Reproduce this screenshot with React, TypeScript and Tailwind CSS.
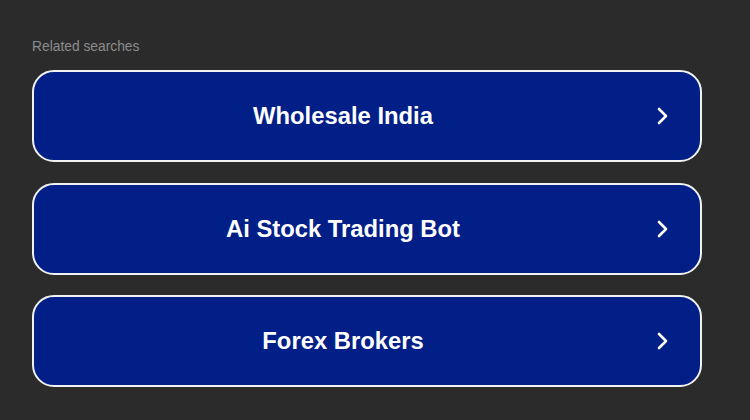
const items = ['Wholesale India', 'Ai Stock Trading Bot', 'Forex Brokers'];

export default function App() {
  return (
    <div className="min-h-screen w-full bg-[#2b2b2b] px-8 pt-[39px]" style={{ fontFamily: '"Liberation Sans", Arial, sans-serif' }}>
      <div className="text-[13.8px] leading-4 text-[#8c8c8c]">Related searches</div>
      <div className="mt-[15px] flex w-[670px] flex-col gap-[20.5px]">
        {items.map((label) => (
          <div
            key={label}
            className="relative flex h-[92px] items-center justify-center rounded-[22px] border-2 border-[#f2f2f2] bg-[#021e87] pr-12"
          >
            <span className="text-[23.8px] font-bold text-white">{label}</span>
            <svg
              className="absolute right-[30px] top-1/2 -translate-y-1/2"
              width="14"
              height="20"
              viewBox="0 0 14 20"
              fill="none"
              stroke="white"
              strokeWidth="2.6"
              strokeLinecap="round"
              strokeLinejoin="round"
            >
              <path d="M3 3l7 7-7 7" />
            </svg>
          </div>
        ))}
      </div>
    </div>
  );
}
